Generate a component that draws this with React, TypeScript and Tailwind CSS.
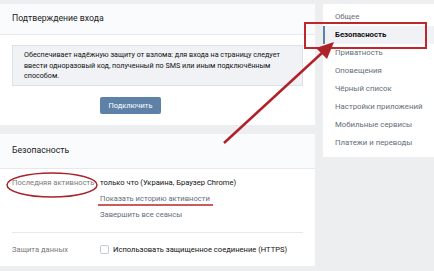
const menu = [
  "Общее",
  "Безопасность",
  "Приватность",
  "Оповещения",
  "Чёрный список",
  "Настройки приложений",
  "Мобильные сервисы",
  "Платежи и переводы",
];

export default function App() {
  return (
    <div
      className="relative w-[434px] h-[271px] overflow-hidden bg-[#edeef0] text-[7.6px] text-[#111]"
      style={{ fontFamily: "Roboto, 'Open Sans', sans-serif" }}
    >
      <div className="flex gap-[8px] pt-[4px]">
        <div className="w-[315px] flex flex-col gap-[9px] shrink-0">
          {/* login confirmation */}
          <div className="bg-white">
            <div className="h-[31px] flex items-center px-[12px] border-b border-[#e7e8ec] bg-[#fafbfc] text-[8.7px] text-[#222]">
              Подтверждение входа
            </div>
            <div className="px-[12px] pt-[10px] pb-[11px]">
              <div className="h-[41px] border border-[#dce1e6] bg-[#f0f2f5] pl-[11px] pr-[16px] pt-[4px] leading-[10.5px] text-[7.2px]">
                Обеспечивает надёжную защиту от взлома: для входа на страницу следует
                ввести одноразовый код, полученный по SMS или иным подключённым
                способом.
              </div>
              <div className="mt-[11px] pl-[88px]">
                <div className="w-[61px] h-[17px] flex items-center justify-center bg-[#5e81a8] text-white text-[7.4px] rounded-[2px]">
                  Подключить
                </div>
              </div>
            </div>
          </div>

          {/* security */}
          <div className="bg-white">
            <div className="h-[35px] flex items-center px-[12px] border-b border-[#e7e8ec] bg-[#fafbfc] text-[8.7px] text-[#222]">
              Безопасность
            </div>
            <div className="px-[12px] pt-[6px]">
              <div className="flex leading-[16px] pb-[9px] border-b border-[#e7e8ec]">
                <div className="w-[88px] text-[#7a7a7a]">Последняя активность</div>
                <div>
                  <div>только что (Украина, Браузер Chrome)</div>
                  <div className="text-[#5f6d80]">Показать историю активности</div>
                  <div className="text-[#5f6d80]">Завершить все сеансы</div>
                </div>
              </div>
              <div className="flex items-center h-[33px]">
                <div className="w-[88px] text-[#7a7a7a]">Защита данных</div>
                <div className="w-[9px] h-[9px] border border-[#c5ccd4] rounded-[2px] mr-[4px]" />
                <div>Использовать защищенное соединение (HTTPS)</div>
              </div>
            </div>
          </div>
        </div>

        {/* side menu */}
        <div className="flex-1 bg-white h-[153px] pt-[4px] text-[7.8px]">
          {menu.map((m, i) => (
            <div
              key={m}
              className={
                i === 1
                  ? "h-[18px] flex items-center pl-[10px] border-l-2 border-[#5e81a8] bg-[#f0f2f5] font-bold text-[#111]"
                  : "h-[18px] flex items-center pl-[12px] text-[#646d78]"
              }
            >
              {m}
            </div>
          ))}
        </div>
      </div>

      {/* red annotations */}
      <svg className="absolute inset-0 pointer-events-none" width="434" height="271">
        <rect x="305" y="23" width="121" height="25" fill="none" stroke="#c0272d" strokeWidth="2" />
        <ellipse cx="52" cy="185" rx="45" ry="12" fill="none" stroke="#a8232a" strokeWidth="1.5" />
        <line x1="98" y1="205" x2="213" y2="205" stroke="#b8242a" strokeWidth="1.5" />
        <line x1="224" y1="143" x2="323" y2="52" stroke="#b0222a" strokeWidth="2.5" />
        <polygon points="334,42 316,48 327,59" fill="#b0222a" />
      </svg>
    </div>
  );
}
